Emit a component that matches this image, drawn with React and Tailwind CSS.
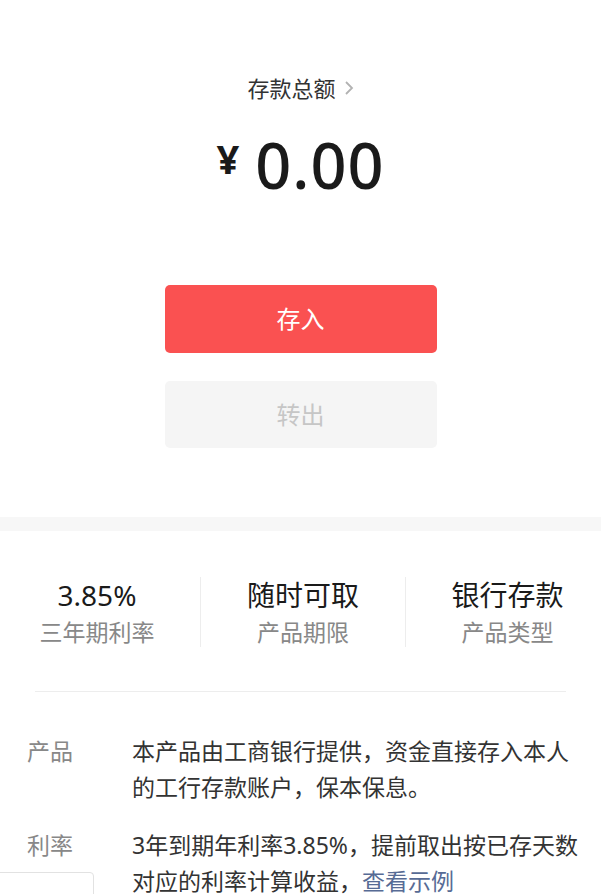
export default function App() {
  const font = { fontFamily: '"Noto Sans", "Noto Sans CJK SC", sans-serif' }

  return (
    <div className="relative h-[894px] w-full overflow-hidden bg-[#f7f7f7]" style={font}>
      {/* balance */}
      <div className="flex flex-col items-center bg-white pt-[73px] pb-[69px]">
        <div className="flex items-center gap-2 text-[22px] leading-[30px] text-[#333]">
          <span>存款总额</span>
          <svg width="10" height="16" viewBox="0 0 10 16" fill="none" stroke="#b2b2b2" strokeWidth="1.8">
            <path d="M2 2l6 6-6 6" />
          </svg>
        </div>
        <div className="mt-[30px] flex items-start text-[#1a1a1a]">
          <span className="mt-[6px] mr-[16px] text-[40px] leading-none font-bold">¥</span>
          <span className="text-[63px] leading-none font-medium tracking-[1px]">0.00</span>
        </div>
        <button className="mt-[89px] h-[68px] w-[272px] rounded-[5px] bg-[#fa5151] text-[24px] text-white">
          存入
        </button>
        <button className="mt-[28px] h-[67px] w-[272px] rounded-[5px] bg-[#f5f5f5] text-[24px] text-[#c6c6c6]">
          转出
        </button>
      </div>

      {/* product */}
      <div className="mt-[14px] h-full bg-white">
        <div className="grid grid-cols-[200px_205px_1fr] pt-[46px] pb-[44px]">
          <div className="flex flex-col items-center pr-[6px]">
            <span className="text-[28px] leading-[36px] text-[#1a1a1a]">3.85%</span>
            <span className="mt-[4px] text-[23px] leading-[30px] text-[#888]">三年期利率</span>
          </div>
          <div className="flex flex-col items-center border-l border-[#ededed]">
            <span className="text-[28px] leading-[36px] text-[#1a1a1a]">随时可取</span>
            <span className="mt-[4px] text-[23px] leading-[30px] text-[#888]">产品期限</span>
          </div>
          <div className="flex flex-col items-center border-l border-[#ededed] pl-[8px]">
            <span className="text-[28px] leading-[36px] text-[#1a1a1a]">银行存款</span>
            <span className="mt-[4px] text-[23px] leading-[30px] text-[#888]">产品类型</span>
          </div>
        </div>
        <div className="mx-[35px] h-px bg-[#ededed]" />

        <div className="flex flex-col gap-[22px] pt-[41px] pl-[27px] pr-[20px]">
          <div className="flex">
            <span className="w-[105px] shrink-0 text-[23px] leading-[36px] text-[#888]">产品</span>
            <p className="text-[23px] leading-[36px] text-[#333]">
              本产品由工商银行提供，资金直接存入本人的工行存款账户，保本保息。
            </p>
          </div>
          <div className="flex">
            <span className="w-[105px] shrink-0 text-[23px] leading-[36px] text-[#888]">利率</span>
            <p className="text-[23px] leading-[36px] text-[#333]">
              3年到期年利率3.85%，提前取出按已存天数对应的利率计算收益，<span className="text-[#576b95]">查看示例</span>
            </p>
          </div>
        </div>
      </div>

      {/* floating box partly shown */}
      <div className="absolute left-[-2px] top-[872px] h-[40px] w-[96px] rounded-tr-[4px] border border-[#e2e2e2] bg-white" />
    </div>
  )
}
